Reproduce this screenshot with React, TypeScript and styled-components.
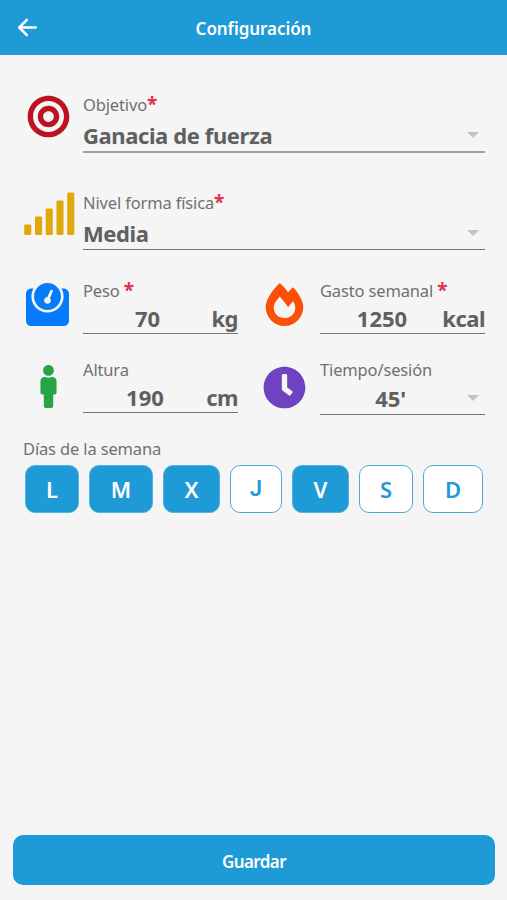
import React from 'react';
import styled, { createGlobalStyle } from 'styled-components';
import { FaBullseye, FaWeight, FaMale, FaFireAlt, FaClock } from 'react-icons/fa';
import { IoArrowBack } from 'react-icons/io5';

const BLUE = '#1e9ad6';

const GlobalStyle = createGlobalStyle`
  *, *::before, *::after { box-sizing: border-box; }
  body { margin: 0; background: #f5f5f5; }
  button { font: inherit; padding: 0; margin: 0; border: 0; cursor: pointer; }
`;

const Screen = styled.div`
  display: flex;
  flex-direction: column;
  height: 900px;
  background: #f5f5f5;
  color: #606060;
  font-family: 'Noto Sans', 'Open Sans', sans-serif;
`;

const Header = styled.header`
  display: grid;
  grid-template-columns: 56px 1fr 56px;
  align-items: center;
  height: 55px;
  flex: none;
  padding-top: 1px;
  background: ${BLUE};
  border-bottom: 1px solid #3d8fbd;
  color: #fff;
`;

const BackButton = styled.button`
  display: flex;
  padding-left: 14px;
  background: none;
  color: #fff;
`;

const Title = styled.h1`
  margin: 3px 0 0;
  font-size: 17px;
  font-weight: 600;
  line-height: 24px;
  letter-spacing: -0.05px;
  text-align: center;
`;

const Form = styled.main`
  flex: 1;
  padding: 37px 22px 0 23px;
`;

const Row = styled.div<{ $height: number }>`
  display: flex;
  justify-content: space-between;
  height: ${(p) => p.$height}px;
`;

const Field = styled.div<{ $width?: number; $iconWidth: number }>`
  display: grid;
  grid-template-columns: ${(p) => p.$iconWidth}px 1fr;
  align-items: start;
  width: ${(p) => (p.$width ? `${p.$width}px` : '100%')};
`;

const IconBox = styled.div<{ $color: string; $top: number; $width: number }>`
  display: flex;
  justify-content: center;
  width: ${(p) => p.$width}px;
  margin-top: ${(p) => p.$top}px;
  color: ${(p) => p.$color};
  svg { flex: none; }
`;

const Label = styled.div`
  height: 26px;
  font-size: 16.5px;
  line-height: 26px;
  letter-spacing: -0.15px;
  color: #707070;
  white-space: pre;
`;

const Required = styled.span`
  font-size: 19px;
  font-weight: 700;
  line-height: 20px;
  color: #e0304e;
`;

const ValueLine = styled.div<{ $height: number; $thick?: boolean }>`
  display: flex;
  align-items: flex-end;
  height: ${(p) => p.$height}px;
  border-bottom: ${(p) => (p.$thick ? '2px solid #a0a0a0' : '1px solid #757575')};
`;

const Value = styled.div<{ $center?: boolean; $bottom: number; $shift?: number }>`
  flex: 1;
  padding-left: ${(p) => p.$shift ?? 0}px;
  margin-bottom: ${(p) => p.$bottom}px;
  font-size: 22px;
  font-weight: 700;
  line-height: 30px;
  letter-spacing: ${(p) => (p.$center ? 0 : -0.4)}px;
  text-align: ${(p) => (p.$center ? 'center' : 'left')};
  white-space: nowrap;
`;

const Unit = styled.div<{ $bottom: number }>`
  width: 60px;
  margin-bottom: ${(p) => p.$bottom}px;
  font-size: 22px;
  font-weight: 700;
  line-height: 30px;
  letter-spacing: -0.5px;
  text-align: right;
`;

const Caret = styled.span`
  width: 0;
  height: 0;
  margin: 0 6px 13px 0;
  border: 6px solid transparent;
  border-top-color: #c4c4c4;
  border-bottom: 0;
`;

const Days = styled.div`
  display: flex;
  justify-content: space-between;
  padding: 0 2px;
  margin-top: 3px;
`;

const Day = styled.button<{ $width: number; $on: boolean; $font?: string }>`
  width: ${(p) => p.$width}px;
  height: 48px;
  padding-bottom: ${(p) => (p.$font ? 0 : 1)}px;
  border: 1px solid ${(p) => (p.$on ? '#55b2de' : '#4aabd8')};
  border-radius: 10px;
  background: ${(p) => (p.$on ? BLUE : '#fff')};
  color: ${(p) => (p.$on ? '#fff' : BLUE)};
  font-family: ${(p) => p.$font ?? 'inherit'};
  font-size: 22px;
  font-weight: 600;
  line-height: ${(p) => (p.$font ? 46 : 44)}px;
`;

const Footer = styled.footer`
  padding: 0 12px 15px 13px;
`;

const SaveButton = styled.button`
  display: block;
  width: 100%;
  height: 50px;
  padding-top: 2px;
  border-radius: 10px;
  background: ${BLUE};
  color: #fff;
  font-size: 17px;
  font-weight: 600;
  letter-spacing: -0.6px;
`;

const days = [
  { name: 'L', on: true, width: 54 },
  { name: 'M', on: true, width: 64 },
  { name: 'X', on: true, width: 57 },
  { name: 'J', on: false, width: 52, font: 'Roboto, sans-serif' },
  { name: 'V', on: true, width: 57 },
  { name: 'S', on: false, width: 54 },
  { name: 'D', on: false, width: 60 },
];

const barHeights = [10.5, 18.5, 26.5, 34.5, 42.5];

function LevelBars() {
  return (
    <svg width="51" height="43" viewBox="0 0 51 43" fill="currentColor">
      {barHeights.map((h, i) => (
        <rect key={h} x={0.2 + i * 10.75} y={43 - h} width="7.1" height={h} rx="1.3" />
      ))}
    </svg>
  );
}

export default function App() {
  return (
    <>
      <GlobalStyle />
      <Screen>
        <Header>
          <BackButton aria-label="Volver"><IoArrowBack size={27} /></BackButton>
          <Title>Configuración</Title>
        </Header>
        <Form>
          <Row $height={98}>
            <Field $iconWidth={60}>
              <IconBox $color="#bd1220" $top={3} $width={50}><FaBullseye size={43} /></IconBox>
              <div>
                <Label>Objetivo<Required>*</Required></Label>
                <ValueLine $height={35} $thick>
                  <Value $bottom={1}>Ganacia de fuerza</Value>
                  <Caret />
                </ValueLine>
              </div>
            </Field>
          </Row>
          <Row $height={88}>
            <Field $iconWidth={60}>
              <IconBox $color="#e0a80d" $top={2} $width={53}><LevelBars /></IconBox>
              <div>
                <Label>Nivel forma física<Required>*</Required></Label>
                <ValueLine $height={34}>
                  <Value $bottom={1}>Media</Value>
                  <Caret />
                </ValueLine>
              </div>
            </Field>
          </Row>
          <Row $height={79}>
            <Field $width={215} $iconWidth={60}>
              <IconBox $color="#067bfb" $top={5} $width={49}><FaWeight size={43} /></IconBox>
              <div>
                <Label>Peso <Required>*</Required></Label>
                <ValueLine $height={30}>
                  <Value $center $bottom={0} $shift={34}>70</Value>
                  <Unit $bottom={0}>kg</Unit>
                </ValueLine>
              </div>
            </Field>
            <Field $width={222} $iconWidth={57}>
              <IconBox $color="#fc4f08" $top={5} $width={43}><FaFireAlt size={43} /></IconBox>
              <div>
                <Label>Gasto semanal <Required>*</Required></Label>
                <ValueLine $height={30}>
                  <Value $center $bottom={0} $shift={19}>1250</Value>
                  <Unit $bottom={0}>kcal</Unit>
                </ValueLine>
              </div>
            </Field>
          </Row>
          <Row $height={79}>
            <Field $width={215} $iconWidth={60}>
              <IconBox $color="#27a546" $top={8} $width={50}><FaMale size={43} /></IconBox>
              <div>
                <Label>Altura</Label>
                <ValueLine $height={30}>
                  <Value $center $bottom={0} $shift={29}>190</Value>
                  <Unit $bottom={0}>cm</Unit>
                </ValueLine>
              </div>
            </Field>
            <Field $width={222} $iconWidth={57}>
              <IconBox $color="#6f42c1" $top={9} $width={43}><FaClock size={43} /></IconBox>
              <div>
                <Label>Tiempo/sesión</Label>
                <ValueLine $height={32}>
                  <Value $center $bottom={1}>45'&nbsp;</Value>
                  <Caret />
                </ValueLine>
              </div>
            </Field>
          </Row>
          <Label>Días de la semana</Label>
          <Days>
            {days.map((d) => (
              <Day key={d.name} $on={d.on} $width={d.width} $font={d.font}>{d.name}</Day>
            ))}
          </Days>
        </Form>
        <Footer><SaveButton>Guardar</SaveButton></Footer>
      </Screen>
    </>
  );
}
